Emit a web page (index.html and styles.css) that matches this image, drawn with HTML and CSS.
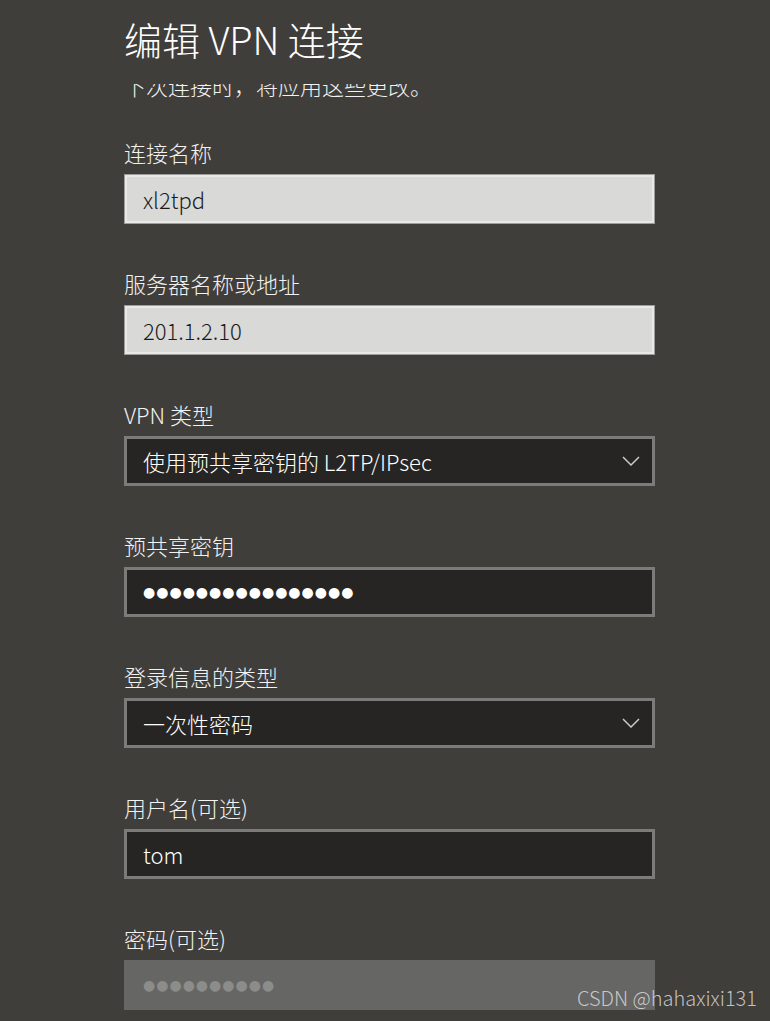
FILE: index.html
```html
<!DOCTYPE html>
<html lang="zh-CN">
<head>
    <meta charset="UTF-8">
    <meta name="viewport" content="width=device-width, initial-scale=1.0">
    <title>编辑 VPN 连接</title>
    <link rel="stylesheet" href="styles.css">
</head>
<body>
    <div class="page">
        <header class="header">
            <h1 class="title">编辑 VPN 连接</h1>
        </header>

        <!-- form area, scrolled a little so the note is cut under the header -->
        <div class="scroller">
            <div class="form">
                <p class="note">下次连接时，将应用这些更改。</p>

                <div class="field">
                    <label class="field-label">连接名称</label>
                    <div class="box box-light">xl2tpd</div>
                </div>

                <div class="field">
                    <label class="field-label">服务器名称或地址</label>
                    <div class="box box-light">201.1.2.10</div>
                </div>

                <div class="field">
                    <label class="field-label">VPN 类型</label>
                    <div class="box box-dark select">
                        <span>使用预共享密钥的 L2TP/IPsec</span>
                        <svg class="chevron" width="18" height="10" viewBox="0 0 18 10">
                            <polyline points="1,1 9,9 17,1" fill="none" stroke="#c9c9c9" stroke-width="1.5"/>
                        </svg>
                    </div>
                </div>

                <div class="field">
                    <label class="field-label">预共享密钥</label>
                    <div class="box box-dark"><span class="dots">●●●●●●●●●●●●●●●●</span></div>
                </div>

                <div class="field">
                    <label class="field-label">登录信息的类型</label>
                    <div class="box box-dark select">
                        <span>一次性密码</span>
                        <svg class="chevron" width="18" height="10" viewBox="0 0 18 10">
                            <polyline points="1,1 9,9 17,1" fill="none" stroke="#c9c9c9" stroke-width="1.5"/>
                        </svg>
                    </div>
                </div>

                <div class="field">
                    <label class="field-label">用户名(可选)</label>
                    <div class="box box-dark">tom</div>
                </div>

                <div class="field">
                    <label class="field-label">密码(可选)</label>
                    <div class="box box-disabled"><span class="dots dots-dim">●●●●●●●●●●</span></div>
                </div>
            </div>
        </div>

        <div class="watermark">CSDN @hahaxixi131</div>
    </div>
</body>
</html>
```

FILE: styles.css
```css
body {
    margin: 0;
    padding: 0;
    background-color: #403e3a;
    font-family: "Noto Sans CJK SC", sans-serif;
    font-weight: 300;
    color: #f2f2f2;
}
.page {
    position: relative;
    width: 770px;
    height: 1021px;
    overflow: hidden;
}
.header {
    height: 84px;
    padding: 14px 0 0 124px;
    box-sizing: border-box;
}
.title {
    margin: 0;
    font-size: 38px;
    font-weight: 300;
    line-height: 50px;
    color: #ffffff;
}
.scroller {
    height: 937px;
    overflow: hidden;
}
.form {
    width: 531px;
    margin-left: 124px;
    margin-top: -14px; /* scrolled position */
}
.note {
    margin: 0 0 37px 0;
    font-size: 22px;
    line-height: 30px;
}
.field {
    margin-bottom: 44px;
}
.field-label {
    display: block;
    font-size: 22px;
    line-height: 30px;
    margin-bottom: 7px;
}
.box {
    height: 50px;
    box-sizing: border-box;
    display: flex;
    align-items: center;
    font-size: 22px;
}
.box-light {
    background-color: #d9d9d7;
    border: 1px solid #9d9d9b;
    box-shadow: inset 0 0 0 2px #e8e8e6;
    padding-left: 18px;
    color: #1b1b1b;
}
.box-dark {
    background-color: #262523;
    border: 3px solid #7b7b79;
    padding-left: 16px;
    color: #ffffff;
}
.select {
    justify-content: space-between;
    padding-right: 12px;
}
.chevron {
    display: block;
}
.box-disabled {
    background-color: #666664;
    padding-left: 19px;
}
.dots {
    font-family: "DejaVu Sans", sans-serif;
    font-weight: normal;
    font-size: 14px;
    letter-spacing: 1px;
}
.dots-dim {
    color: #8c8c8a;
}
.watermark {
    position: absolute;
    right: 13px;
    bottom: 9px;
    font-size: 20px;
    color: rgba(220, 220, 220, 0.85);
}
```
